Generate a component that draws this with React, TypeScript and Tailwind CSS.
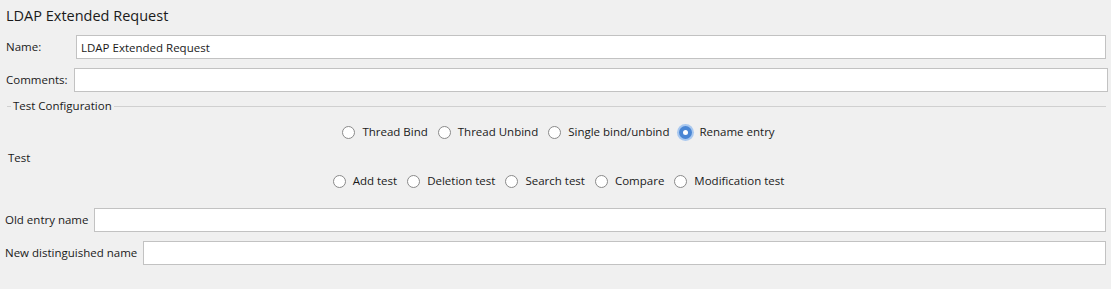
import { useState } from "react";

const row1 = ["Thread Bind", "Thread Unbind", "Single bind/unbind", "Rename entry"];
const row2 = ["Add test", "Deletion test", "Search test", "Compare", "Modification test"];

const Radio = ({ label, checked, onClick }: { label: string; checked: boolean; onClick: () => void }) => (
  <button type="button" onClick={onClick} className="flex items-center gap-[7px] cursor-default">
    {checked ? (
      <span className="w-[13px] h-[13px] rounded-full bg-[#4a86d4] ring-[2px] ring-[#a9c8ef] flex items-center justify-center">
        <span className="w-[5px] h-[5px] rounded-full bg-white" />
      </span>
    ) : (
      <span className="w-[13px] h-[13px] rounded-full border border-[#8a8a8a] bg-white" />
    )}
    <span>{label}</span>
  </button>
);

const Field = ({ label, value, labelClass }: { label: string; value?: string; labelClass: string }) => (
  <div className="flex items-center">
    <label className={"shrink-0 " + labelClass}>{label}</label>
    <input
      className="flex-1 h-[24px] border border-[#c2c2c2] bg-white px-[4px] focus:outline-none"
      defaultValue={value}
    />
  </div>
);

export default function App() {
  const [mode, setMode] = useState("Rename entry");
  const [test, setTest] = useState("");

  return (
    <div
      className="w-[1111px] h-[289px] bg-[#f0f0f0] text-[11.5px] leading-[16px] text-[#1a1a1a] overflow-hidden"
      style={{ fontFamily: '"Open Sans", "Noto Sans", sans-serif' }}
    >
      <h1 className="pl-[6px] pt-[6px] text-[14.5px] leading-[20px]">LDAP Extended Request</h1>
      <div className="mt-[9px] pl-[6px] pr-[5px]">
        <Field label="Name:" value="LDAP Extended Request" labelClass="w-[70px]" />
      </div>
      <div className="mt-[9px] pl-[6px] pr-[3px]">
        <Field label="Comments:" labelClass="w-[68px]" />
      </div>
      <div className="mt-[6px] flex items-center pl-[7px] pr-[5px]">
        <span className="w-[4px] border-t border-[#d0d0d0]" />
        <span className="px-[2px]">Test Configuration</span>
        <span className="flex-1 border-t border-[#d0d0d0]" />
      </div>
      <div className="mt-[10px] flex justify-center gap-[10px] pl-[6px]">
        {row1.map((r) => (
          <Radio key={r} label={r} checked={mode === r} onClick={() => setMode(r)} />
        ))}
      </div>
      <div className="mt-[10px] pl-[8px]">Test</div>
      <div className="mt-[7px] flex justify-center gap-[10px] pl-[6px]">
        {row2.map((r) => (
          <Radio key={r} label={r} checked={test === r} onClick={() => setTest(r)} />
        ))}
      </div>
      <div className="mt-[19px] pl-[5px] pr-[5px]">
        <Field label="Old entry name" labelClass="w-[89px]" />
      </div>
      <div className="mt-[9px] pl-[5px] pr-[5px]">
        <Field label="New distinguished name" labelClass="w-[138px]" />
      </div>
    </div>
  );
}
